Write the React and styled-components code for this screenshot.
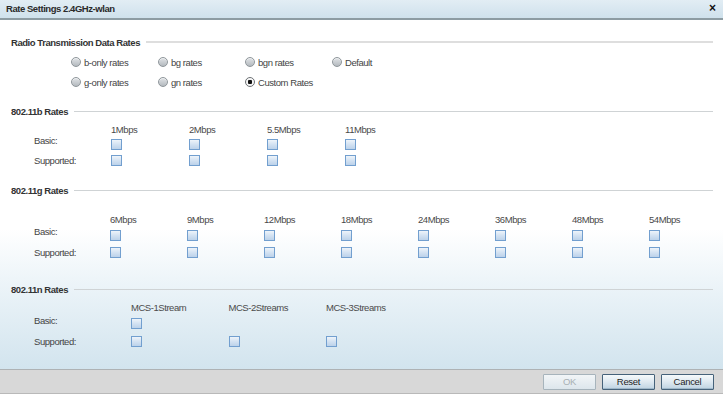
import React from "react";
import styled, { createGlobalStyle } from "styled-components";

const Global = createGlobalStyle`
  html, body { margin: 0; padding: 0; background: #fff; }
  body { font-family: "Liberation Sans", Arial, sans-serif; }
  * { box-sizing: border-box; }
`;

const Dialog = styled.div`
  width: 723px;
  height: 394px;
  display: flex;
  flex-direction: column;
  font-family: "Liberation Sans", Arial, sans-serif;
  font-size: 9.5px;
  letter-spacing: -0.45px;
  color: #444;
  overflow: hidden;
`;

const TitleBar = styled.div`
  height: 20px;
  flex: none;
  display: flex;
  align-items: center;
  justify-content: space-between;
  padding: 0 6px 2px 6px;
  background: linear-gradient(to bottom, #e2edf4 0%, #cfe1ec 100%);
  border-bottom: 2px solid #8d9ca3;
`;

const Title = styled.div`
  font-weight: bold;
  font-size: 9.5px;
  color: #2a2a2a;
`;

const Close = styled.div`
  font-weight: bold;
  font-size: 12px;
  line-height: 10px;
  color: #111;
  margin-right: 1px;
  letter-spacing: 0;
`;

const Body = styled.div`
  flex: 1;
  display: flex;
  flex-direction: column;
  padding: 15px 10px 0 11px;
  background: linear-gradient(to bottom, #ffffff 0%, #ffffff 60%, #eef5f9 74%, #d2e4ee 100%);
`;

const SectionHeader = styled.div`
  display: flex;
  align-items: center;
  gap: 6px;
  height: 14px;
  margin-top: ${(p) => p.$mt || 0}px;
  font-weight: bold;
  color: #333;
`;

const Rule = styled.div`
  flex: 1;
  height: ${(p) => (p.$thick ? 2 : 1)}px;
  background: ${(p) => (p.$thick ? "#dedede" : "#cfd3d5")};
`;

const RadioGrid = styled.div`
  display: grid;
  grid-template-columns: repeat(4, 87px);
  grid-auto-rows: 20px;
  margin: 3px 0 0 60px;
`;

const RadioItem = styled.label`
  display: flex;
  align-items: center;
  gap: 3px;
  white-space: nowrap;
`;

const RadioDot = styled.span`
  width: 10px;
  height: 10px;
  border-radius: 50%;
  flex: none;
  border: 1px solid ${(p) => (p.$checked ? "#6d7175" : "#8f969b")};
  background: ${(p) =>
    p.$checked
      ? "radial-gradient(circle, #111 0 2px, #f4f4f4 2.5px)"
      : "linear-gradient(to bottom, #e0e3e6 0%, #b4babf 100%)"};
  box-shadow: inset 0 1px 0 rgba(255,255,255,0.6);
`;

const RateGrid = styled.div`
  display: grid;
  grid-template-columns: ${(p) => p.$labelW}px repeat(${(p) => p.$cols}, ${(p) => p.$colW}px);
  grid-template-rows: ${(p) => p.$rows};
  margin: ${(p) => p.$mt}px 0 0 23px;
  align-items: center;
`;

const RowLabel = styled.div`
  white-space: nowrap;
  margin-bottom: ${(p) => (p.$lift || 0) * 2}px;
`;

const ColHead = styled.div`
  white-space: nowrap;
  color: #4a4a4a;
`;

const Check = styled.span`
  display: block;
  width: 11px;
  height: 11px;
  border: 1px solid #729fcf;
  background: linear-gradient(to bottom, #eef4fa 0%, #d3e2f2 50%, #bcd2ea 100%);
`;

const Empty = styled.span``;

const Footer = styled.div`
  flex: none;
  height: 25px;
  display: flex;
  align-items: center;
  justify-content: flex-end;
  gap: 6px;
  padding: 0 9px 0 0;
  background: #d8d8d8;
  border-top: 1px solid #aeb2b4;
  border-bottom: 1px solid #b9b9b9;
`;

const Button = styled.button`
  width: 53px;
  height: 16px;
  padding: 0;
  font-family: "Liberation Sans", Arial, sans-serif;
  font-size: 9.5px;
  letter-spacing: -0.3px;
  color: ${(p) => (p.disabled ? "#a9b0b4" : "#1e1e1e")};
  border: 1px solid ${(p) => (p.disabled ? "#a7b4bc" : "#46627a")};
  border-radius: 1px;
  background: ${(p) =>
    p.disabled
      ? "linear-gradient(to bottom, #f2f5f7 0%, #dde6ec 100%)"
      : "linear-gradient(to bottom, #f6f9fb 0%, #dde8f0 50%, #bfd3e2 100%)"};
  box-shadow: ${(p) => (p.disabled ? "none" : "inset 0 -1px 0 #9fb7c9")};
  cursor: default;
`;

const radios = [
  ["b-only rates", false],
  ["bg rates", false],
  ["bgn rates", false],
  ["Default", false],
  ["g-only rates", false],
  ["gn rates", false],
  ["Custom Rates", true],
];

function RateTable({ heads, basic, labelW, colW, rows, mt, lift }) {
  return (
    <RateGrid $labelW={labelW} $colW={colW} $cols={heads.length} $rows={rows} $mt={mt}>
      <Empty />
      {heads.map((h) => (
        <ColHead key={h}>{h}</ColHead>
      ))}
      <RowLabel $lift={lift}>Basic:</RowLabel>
      {heads.map((h, i) => (i < basic ? <Check key={h} /> : <Empty key={h} />))}
      <RowLabel>Supported:</RowLabel>
      {heads.map((h) => (
        <Check key={h} />
      ))}
    </RateGrid>
  );
}

export default function App() {
  return (
    <>
      <Global />
      <Dialog>
        <TitleBar>
          <Title>Rate Settings 2.4GHz-wlan</Title>
          <Close>×</Close>
        </TitleBar>
        <Body>
          <SectionHeader>
            Radio Transmission Data Rates
            <Rule $thick />
          </SectionHeader>
          <RadioGrid>
            {radios.map(([label, checked]) => (
              <RadioItem key={label}>
                <RadioDot $checked={checked} />
                {label}
              </RadioItem>
            ))}
          </RadioGrid>

          <SectionHeader $mt={12}>
            802.11b Rates
            <Rule />
          </SectionHeader>
          <RateTable
            heads={["1Mbps", "2Mbps", "5.5Mbps", "11Mbps"]}
            basic={4}
            labelW={77}
            colW={78}
            rows="14px 16px 16px"
            mt={4}
            lift={4}
          />

          <SectionHeader $mt={15}>
            802.11g Rates
            <Rule />
          </SectionHeader>
          <RateTable
            heads={["6Mbps", "9Mbps", "12Mbps", "18Mbps", "24Mbps", "36Mbps", "48Mbps", "54Mbps"]}
            basic={8}
            labelW={76}
            colW={77}
            rows="15px 17px 17px"
            mt={15}
            lift={4}
          />

          <SectionHeader $mt={21}>
            802.11n Rates
            <Rule />
          </SectionHeader>
          <RateTable
            heads={["MCS-1Stream", "MCS-2Streams", "MCS-3Streams"]}
            basic={1}
            labelW={97}
            colW={97.5}
            rows="14px 18px 18px"
            mt={4}
            lift={3}
          />
        </Body>
        <Footer>
          <Button disabled>OK</Button>
          <Button>Reset</Button>
          <Button>Cancel</Button>
        </Footer>
      </Dialog>
    </>
  );
}
